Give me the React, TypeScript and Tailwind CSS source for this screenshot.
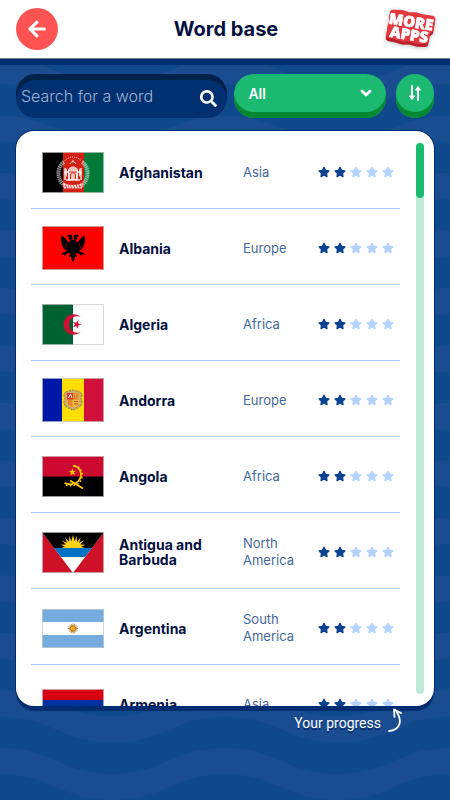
import type { ReactNode } from "react";
import { FaArrowLeft, FaSearch, FaStar } from "react-icons/fa";

const spokes = (count: number) => Array.from({ length: count }, (_, i) => (i * 360) / count);

function Flag({ label, height, children }: { label: string; height: number; children: ReactNode }) {
  return (
    <svg role="img" aria-label={label} viewBox={`0 0 62 ${height}`} width={62} height={height} className="block">
      {children}
      <rect x="0.5" y="0.5" width="61" height={height - 1} fill="none" stroke="#c9c9c9" strokeOpacity="0.75" />
    </svg>
  );
}

function AfghanistanFlag() {
  return (
    <Flag label="Flag of Afghanistan" height={41}>
      <rect width="21" height="41" fill="#000" />
      <rect x="21" width="21" height="41" fill="#d32011" />
      <rect x="42" width="20" height="41" fill="#007a36" />
      <g fill="none" stroke="#fff">
        <path d="M22 10C14.500 15 14.500 28 23 34M40 10C47.500 15 47.500 28 39 34" strokeWidth="4" strokeDasharray="1.500 0.500" opacity="0.55" />
        <path d="M23 8.500C27 4 35 4 39 8.500" strokeWidth="1" strokeDasharray="1 1" opacity="0.8" />
        <path d="M31 8v2M28 12c1-3 5-3 6 0" strokeWidth="1" opacity="0.8" />
        <path d="M21.500 32c5 2.500 14 2.500 19 0M22 35.500h18" strokeWidth="2" strokeDasharray="2 0.7" opacity="0.85" />
        <path d="M24 20h14M24 28h14M27 18v11M35 18v11M23 16v12M39 16v12" strokeWidth="1.500" opacity="0.85" />
      </g>
      <path d="M26 19c0-6 10-6 10 0v9H26z" fill="#fff" opacity="0.75" />
      <path d="M28.500 27v-4c0-3 5-3 5 0v4M27 20h8" fill="none" stroke="#d32011" />
      <path d="m22 21 3-5v9zM40 21l-3-5v9z" fill="#fff" opacity="0.85" />
    </Flag>
  );
}

function AlbaniaFlag() {
  const half =
    "M31 12 30 9.500 28 8.500 26 9 25 10.500 27.500 11 26.500 12.500 28 14 27.500 16.500 25.500 15.500 23 12 20.500 10 19 9 20 12 18.500 11.500 19.500 14.500 18.500 14.500 20 17.500 19 17.500 21 19.500 19.500 20 22 21 20.500 22 23 22.500 22 24 24.500 23.500 24 25.500 20.500 27 19 29 22 28 22.500 30 25 27.500 28.500 27 27 31 29 30.500 29.500 33 31 36z";
  return (
    <Flag label="Flag of Albania" height={44}>
      <rect width="62" height="44" fill="#fe0000" />
      <path d={half} />
      <path d={half} transform="matrix(-1 0 0 1 62 0)" />
      <path d="m31 8-.8 5.500h1.600zM25 17l-1.500 5M37 17l1.500 5" fill="#fe0000" stroke="#fe0000" strokeWidth="0.500" />
    </Flag>
  );
}

function AlgeriaFlag() {
  return (
    <Flag label="Flag of Algeria" height={41}>
      <rect width="62" height="41" fill="#fff" />
      <rect width="31" height="41" fill="#006233" />
      <path d="M39 13.200A10.300 10.300 0 1 0 39 27.800A8.200 8.200 0 1 1 39 13.200Z" fill="#d21034" />
      <path d="m39.500 20.500-3.300 1.100.1 3.500-2.100-2.800-3.300 1 2-2.800-2-2.800 3.300 1 2.100-2.800-.1 3.500z" fill="#d21034" />
    </Flag>
  );
}

function AndorraFlag() {
  return (
    <Flag label="Flag of Andorra" height={44}>
      <rect width="20" height="44" fill="#0018a8" />
      <rect x="20" width="22" height="44" fill="#fedf00" />
      <rect x="42" width="20" height="44" fill="#d0103a" />
      <path d="M24 14l3-1 4-1 4 1 3 1 2 3-1 3 1 4-1 4-4 2-4 2-4-2-4-2-1-4 1-4-1-3z" fill="#cfae68" stroke="#a98f50" strokeWidth="1.500" strokeDasharray="2 1" />
      <path d="M25 15h12v9c0 3-2 4-6 5.500-4-1.500-6-2.500-6-5.500z" fill="#eaa52c" />
      <path d="M25 15h6v6.500h-6z" fill="#d7322d" />
      <path d="m26.500 20 2-4 1.500 4" stroke="#fff" fill="none" />
      <path d="M27 22v5M29 22v6M32.500 15.500v6M35 15.500v6" stroke="#e16b2b" />
      <path d="M31 22h6v3c0 2-3 3-6 4z" fill="#e9c63a" />
      <path d="M32 23.500h4M32 26h4" stroke="#ce3a2d" strokeWidth="1.200" />
    </Flag>
  );
}

function AngolaFlag() {
  return (
    <Flag label="Flag of Angola" height={41}>
      <rect width="62" height="21" fill="#cc092f" />
      <rect y="20.500" width="62" height="20.500" />
      <g fill="none" stroke="#ffcb00">
        <path d="M31 9.800C39 10 41 20 36.500 25 33 28.500 27 29 22.500 27" strokeWidth="1.700" />
        <path d="M32 9.400C41 11 42 21 37.500 26.500 33 30.500 27 30.500 22.500 28.500" strokeWidth="1.500" strokeDasharray="1.800 2" />
        <path d="m28 24.500 13 8" strokeWidth="1.800" />
      </g>
      <path d="m30.500 12.300.8 2.700 2.900-.2-2.300 1.800 1.100 2.700-2.500-1.600-2.300 1.900.8-2.900-2.500-1.500 2.900-.1z" fill="#ffcb00" />
    </Flag>
  );
}

function AntiguaFlag() {
  return (
    <Flag label="Flag of Antigua and Barbuda" height={41}>
      <rect width="62" height="41" fill="#ce1126" />
      <path d="M0 0h62L31 41z" fill="#fff" />
      <path d="M0 0h62L50 16H12z" />
      <path d="M12 16h38l-7 9H19z" fill="#0072c6" />
      <path
        d="M19 16l4-1.200-4.500-2 5.200-.2-3.700-4.300 5 2.700-1.800-5.500 3.800 4.200.3-5.700 2 5.200L31 3l1.700 6.200 2-5.200.3 5.700 3.800-4.200-1.800 5.500 5-2.700-3.700 4.300 5.200.2-4.500 2 4 1.200z"
        fill="#fcd116"
      />
    </Flag>
  );
}

function ArgentinaFlag() {
  return (
    <Flag label="Flag of Argentina" height={39}>
      <rect width="62" height="39" fill="#74acdf" />
      <rect y="13" width="62" height="13" fill="#fff" />
      <g transform="translate(31 19.500)">
        {spokes(16).map((a) => (
          <path key={a} d="M0-2.500V-5" stroke="#b8894a" strokeWidth="0.900" transform={`rotate(${a})`} />
        ))}
        <circle r="2.800" fill="#f6a40e" stroke="#94601f" strokeWidth="0.700" />
      </g>
    </Flag>
  );
}

function ArmeniaFlag() {
  return (
    <Flag label="Flag of Armenia" height={31}>
      <rect width="62" height="11" fill="#d90012" />
      <rect y="11" width="62" height="10" fill="#0033a0" />
      <rect y="21" width="62" height="10" fill="#f2a800" />
    </Flag>
  );
}

const words = [
  { name: "Afghanistan", region: "Asia", stars: 2, flag: <AfghanistanFlag /> },
  { name: "Albania", region: "Europe", stars: 2, flag: <AlbaniaFlag /> },
  { name: "Algeria", region: "Africa", stars: 2, flag: <AlgeriaFlag /> },
  { name: "Andorra", region: "Europe", stars: 2, flag: <AndorraFlag /> },
  { name: "Angola", region: "Africa", stars: 2, flag: <AngolaFlag /> },
  { name: "Antigua and Barbuda", region: "North America", stars: 2, flag: <AntiguaFlag /> },
  { name: "Argentina", region: "South America", stars: 2, flag: <ArgentinaFlag /> },
  { name: "Armenia", region: "Asia", stars: 2, flag: <ArmeniaFlag /> },
];

function Waves() {
  const band = "M0 0C50 0 62 26 112.500 26S175 0 225 0V26C175 26 163 52 112.500 52S50 26 0 26Z";
  return (
    <svg aria-hidden="true" className="absolute inset-0 -z-10 h-full w-full">
      <defs>
        <pattern id="waves" y="58" width="225" height="57.500" patternUnits="userSpaceOnUse">
          <path d={band} fill="#1a4c90" />
        </pattern>
      </defs>
      <rect width="100%" height="100%" fill="#0f488b" />
      <rect width="100%" height="100%" fill="url(#waves)" />
    </svg>
  );
}

function MoreAppsLogo() {
  const slab = "M7 8l9-1 5 1 8-1 6 1h11v10l-3 2v10l-8 1-7-1-8 1-7-1H7V20l1-2z";
  return (
    <svg
      viewBox="0 0 52 42"
      className="h-[42px] w-[52px] font-['Open_Sans',sans-serif] text-[15px] font-extrabold drop-shadow-[0_1px_2px_rgba(0,0,0,0.25)]"
      textAnchor="middle"
      strokeLinejoin="round"
    >
      <g transform="rotate(9 26 21)">
        <path d={slab} transform="translate(0 3)" fill="#b9202c" stroke="#b9202c" strokeWidth="7" />
        <path d={slab} fill="#e5383f" stroke="#e5383f" strokeWidth="7" />
        <g fill="#fff" stroke="#fff" strokeWidth="0.600">
          <text x="26" y="19">MORE</text>
          <text x="26" y="32">APPS</text>
        </g>
      </g>
    </svg>
  );
}

function Stars({ value }: { value: number }) {
  return (
    <div role="img" aria-label={`${value} of 5 stars`} className="flex gap-1">
      {[1, 2, 3, 4, 5].map((n) => (
        <FaStar key={n} className={n <= value ? "size-3 text-[#0b428c]" : "size-3 text-[#b4d3fa]"} />
      ))}
    </div>
  );
}

export default function App() {
  return (
    <div className="relative isolate flex h-screen flex-col font-[Inter,'Open_Sans',sans-serif]">
      <Waves />
      <header className="grid h-[59px] shrink-0 grid-cols-[1fr_auto_1fr] items-center border-b border-[#6f7d91] bg-white pr-3.5 pl-4 shadow-[0_6px_0_#002e6e]">
        <button aria-label="Back" className="grid size-[42px] place-items-center rounded-full bg-[#ff5353] text-white">
          <FaArrowLeft className="size-5" />
        </button>
        <h1 className="text-[20px] font-bold text-[#05103f]">Word base</h1>
        <button aria-label="More apps" className="justify-self-end">
          <MoreAppsLogo />
        </button>
      </header>

      <form className="mt-[15px] grid h-11 shrink-0 grid-cols-[4fr_3fr_auto] px-4" onSubmit={(e) => e.preventDefault()}>
        <div className="flex min-w-0 items-center rounded-[20px] bg-[#003070] pr-2.5 pl-[5px] shadow-[inset_0_6px_0_#00224a]">
          <input
            type="search"
            aria-label="Search for a word"
            placeholder="Search for a word"
            className="min-w-0 flex-1 bg-transparent text-[16px] font-light text-white outline-none placeholder:text-[#9fb4d6]"
          />
          <button aria-label="Search" className="pt-1 text-white">
            <FaSearch className="size-[17px]" />
          </button>
        </div>
        <div className="relative ml-[7px] min-w-0">
          <select
            aria-label="Category"
            className="h-full w-full appearance-none rounded-[20px] bg-[#1cb971] pb-1.5 pl-3.5 text-[14px] font-semibold text-white shadow-[inset_0_-6px_0_#068832] outline-none"
          >
            <option>All</option>
          </select>
          <svg aria-hidden="true" viewBox="0 0 12 8" className="pointer-events-none absolute top-[15px] right-3.5 h-2 w-3">
            <path d="m2 2 4 4 4-4" fill="none" stroke="#fff" strokeWidth="2.800" strokeLinecap="round" strokeLinejoin="round" />
          </svg>
        </div>
        <button
          type="button"
          aria-label="Change sort order"
          className="ml-2.5 grid w-[38px] place-items-center rounded-[20px] bg-[#1cb971] pb-1.5 shadow-[inset_0_-6px_0_#068832]"
        >
          <svg viewBox="0 0 14 16" className="h-4 w-3.5" fill="none" stroke="#fff" strokeWidth="2">
            <path d="M4 1v11M10 15V4" strokeLinecap="round" />
            <path d="M1.500 11h5L4 14.500zM7.500 5h5L10 1.500z" fill="#fff" strokeWidth="1" strokeLinejoin="round" />
          </svg>
        </button>
      </form>

      <main className="mx-4 mt-[13px] flex min-h-0 flex-1 overflow-hidden rounded-[18px] bg-white shadow-[0_0_0_1px_#002878,0_5px_0_#002e6e]">
        <div className="min-w-0 flex-1 overflow-y-auto pt-0.5 pl-[15px] [scrollbar-width:none]">
          <table className="w-full table-fixed border-separate border-spacing-0">
            <colgroup>
              <col className="w-[88px]" />
              <col />
              <col className="w-[75px]" />
              <col className="w-[82px]" />
            </colgroup>
            <tbody>
              {words.map((w) => (
                <tr key={w.name} className="h-[76px] *:border-b *:border-[#a9cdf5] *:pt-[3px]">
                  <td className="pl-[11px]">{w.flag}</td>
                  <th scope="row" className="pr-6 text-left text-[14px] leading-[15px] font-bold text-[#05103f]">
                    {w.name}
                  </th>
                  <td className="text-[13px] leading-[17px] text-[#44699c]">{w.region}</td>
                  <td>
                    <Stars value={w.stars} />
                  </td>
                </tr>
              ))}
            </tbody>
          </table>
        </div>
        <div className="mt-3 mr-2.5 mb-3 ml-4 w-2 rounded-full bg-[#bdebd5]">
          <div className="h-[10%] rounded-full bg-[#1cb971]" />
        </div>
      </main>

      <footer className="flex h-[94px] shrink-0 items-start justify-end gap-[7px] pr-12">
        <p className="pt-2 font-[Roboto,sans-serif] text-[14px] leading-[18px] text-white [text-shadow:0_2px_0_#002e6e]">
          Your progress
        </p>
        <svg aria-hidden="true" viewBox="0 0 14 26" className="mt-0.5 h-[26px] w-3.5" fill="none" stroke="#fff" strokeWidth="1.800" strokeLinecap="round" strokeLinejoin="round">
          <path d="M1 23C11 22 16 14 7.500 2M6.500 9 6 1.500 13 5" />
        </svg>
      </footer>
    </div>
  );
}
